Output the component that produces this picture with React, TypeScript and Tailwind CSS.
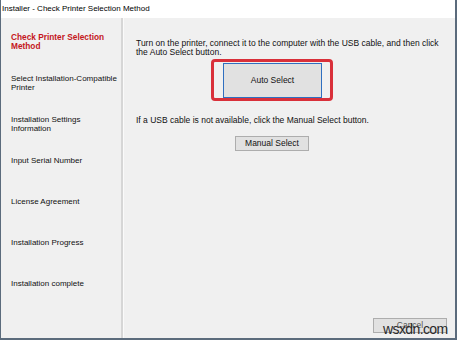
import React from "react";

const font = { fontFamily: '"Liberation Sans", Arial, sans-serif' };

const steps: string[][] = [
  ["Select Installation-Compatible", "Printer"],
  ["Installation Settings", "Information"],
  ["Input Serial Number"],
  ["License Agreement"],
  ["Installation Progress"],
  ["Installation complete"],
];

export default function App() {
  return (
    <div
      style={font}
      className="w-[457px] h-[340px] flex flex-col bg-[#f0f0f0] border-l border-r-2 border-b-2 border-[#5b6b7c] text-[8.5px] text-[#111] overflow-hidden"
    >
      <div className="h-[18px] bg-white flex items-center pl-[1px] text-[8px] text-black shrink-0">
        Installer - Check Printer Selection Method
      </div>
      <div className="flex flex-1 min-h-0">
        <div className="w-[120px] shrink-0 pt-[15px] leading-[9px] whitespace-nowrap text-[8px]">
          <div className="h-[41px] px-[10px] text-[#c4161c] font-bold text-[8.3px]">
            <div>Check Printer Selection</div>
            <div>Method</div>
          </div>
          {steps.map((s) => (
            <div key={s[0]} className="h-[41px] px-[10px]">
              {s.map((l) => (
                <div key={l}>{l}</div>
              ))}
            </div>
          ))}
        </div>
        <div className="w-[2px] bg-[#d6d6d6] shrink-0" />
        <div className="w-[1px] bg-[#fafafa] shrink-0" />
        <div className="flex-1 flex flex-col pl-[12px] pt-[21px] leading-[9px]">
          <div className="whitespace-nowrap">
            Turn on the printer, connect it to the computer with the USB cable, and then click
            <br />
            the Auto Select button.
          </div>
          <div className="mt-[2px] ml-[75px] w-[122px] h-[42px] border-[3px] border-[#d9303a] rounded-[4px] pl-[9px] pt-[1px]">
            <button className="w-[99px] h-[35px] bg-[#e1e1e1] border-[1.5px] border-[#2f6fc0] flex items-center justify-center text-[8.5px]">
              Auto Select
            </button>
          </div>
          <div className="mt-[15px]">
            If a USB cable is not available, click the Manual Select button.
          </div>
          <button className="mt-[11px] ml-[99px] w-[74px] h-[15px] bg-[#e1e1e1] border border-[#adadad] flex items-center justify-center text-[8.5px]">
            Manual Select
          </button>
          <div className="mt-auto mb-[5px] mr-[8px] self-end relative">
            <button className="w-[74px] h-[15px] bg-[#e1e1e1] border border-[#adadad] flex items-center justify-center text-[8.5px] text-[#555]">
              Cancel
            </button>
            <span className="absolute left-[10px] top-[4px] text-[14px] leading-[14px] tracking-[-0.6px] text-[#2a2a2a] whitespace-nowrap">
              wsxdn.com
            </span>
          </div>
        </div>
      </div>
    </div>
  );
}
